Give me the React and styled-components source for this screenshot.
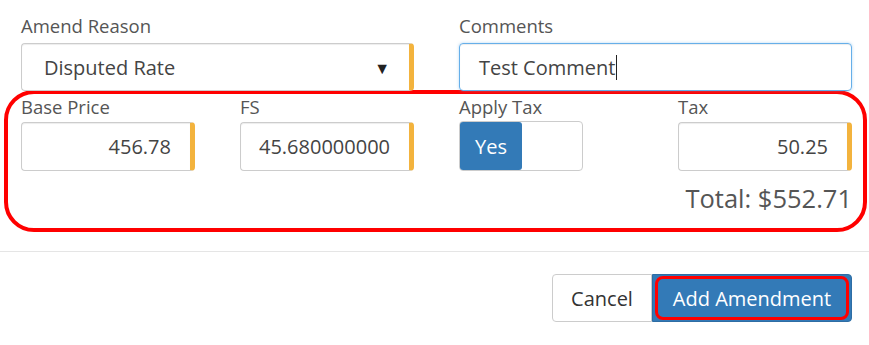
import React from 'react';
import styled, { createGlobalStyle } from 'styled-components';

const GlobalStyle = createGlobalStyle`
  body {
    margin: 0;
    background: #ffffff;
    font-family: "Open Sans", "Liberation Sans", sans-serif;
  }
  * {
    box-sizing: border-box;
  }
`;

// Form body
const Page = styled.div`
  width: 869px;
  padding: 13px 17px 0 21px;
`;

const FieldGrid = styled.div`
  display: grid;
  grid-template-columns: repeat(${(p) => p.cols}, ${(p) => p.colWidth}px);
  column-gap: 45px;
`;

const Field = styled.div`
  display: flex;
  flex-direction: column;
`;

const Label = styled.label`
  font-size: 18.5px;
  line-height: 26px;
  color: #555555;
  margin-bottom: ${(p) => p.gap || 4}px;
`;

// Generic text box, yellow bar marks required fields
const Box = styled.div`
  height: ${(p) => p.h || 48}px;
  display: flex;
  align-items: center;
  justify-content: ${(p) => (p.right ? 'flex-end' : p.start ? 'flex-start' : 'space-between')};
  padding: ${(p) => (p.right ? '0 19px 0 12px' : p.start ? '0 18px 0 19px' : '0 18px 0 22px')};
  border: 1px solid ${(p) => (p.focused ? '#66afe9' : '#cccccc')};
  border-right: ${(p) => (p.required ? '5px solid #f3b33d' : `1px solid ${p.focused ? '#66afe9' : '#cccccc'}`)};
  border-radius: 4px;
  box-shadow: ${(p) =>
    p.focused
      ? 'inset 0 1px 1px rgba(0,0,0,.075), 0 0 3px rgba(102,175,233,.5)'
      : 'inset 0 1px 1px rgba(0,0,0,.075)'};
  font-size: 20px;
  color: #444444;
  white-space: nowrap;
  overflow: hidden;
`;

const Caret = styled.span`
  display: inline-block;
  width: 1px;
  height: 25px;
  background: #222222;
  margin-left: 1px;
  vertical-align: middle;
`;

const Arrow = styled.span`
  font-size: 16px;
  color: #222222;
  margin: 1px 1px 0 0;
`;

// Annotation frame around the price row
const Highlight = styled.div`
  margin: -1px -15px 0 -17px;
  padding: 0 11px 13px 13px;
  border: 4px solid #ff0000;
  border-radius: 30px;
`;

const Toggle = styled.div`
  width: 124px;
  height: 50px;
  display: flex;
  border: 1px solid #cccccc;
  border-radius: 4px;
`;

const ToggleOption = styled.div`
  width: 62px;
  display: flex;
  align-items: center;
  justify-content: center;
  font-size: 20px;
  color: #ffffff;
  background: ${(p) => (p.active ? '#337ab7' : 'transparent')};
  border-radius: 3px;
`;

const Total = styled.div`
  margin-top: 10px;
  text-align: right;
  font-size: 25.5px;
  line-height: 34px;
  color: #555555;
`;

const Divider = styled.div`
  margin: 19px -17px 0 -21px;
  border-top: 1px solid #e5e5e5;
`;

const Footer = styled.div`
  display: flex;
  justify-content: flex-end;
  padding-top: 22px;
`;

const Button = styled.button`
  position: relative;
  height: 48px;
  width: ${(p) => p.w}px;
  font-family: inherit;
  font-size: 20px;
  color: ${(p) => (p.primary ? '#ffffff' : '#333333')};
  background: ${(p) => (p.primary ? '#337ab7' : '#ffffff')};
  border: 1px solid ${(p) => (p.primary ? '#2e6da4' : '#cccccc')};
  border-radius: ${(p) => (p.primary ? '0 4px 4px 0' : '4px 0 0 4px')};
  padding: 0;

  &::after {
    content: '';
    display: ${(p) => (p.marked ? 'block' : 'none')};
    position: absolute;
    inset: 1px 2px 1px 2px;
    border: 3px solid #ff0000;
    border-radius: 8px;
  }
`;

const App = () => (
  <>
    <GlobalStyle />
    <Page>
      <FieldGrid cols={2} colWidth={393}>
        <Field>
          <Label>Amend Reason</Label>
          <Box required>
            <span>Disputed Rate</span>
            <Arrow>▼</Arrow>
          </Box>
        </Field>
        <Field>
          <Label>Comments</Label>
          <Box focused start>
            <span>Test Comment</span>
            <Caret />
          </Box>
        </Field>
      </FieldGrid>

      <Highlight>
        <FieldGrid cols={4} colWidth={174}>
          <Field>
            <Label gap={2}>Base Price</Label>
            <Box required right h={49}>456.78</Box>
          </Field>
          <Field>
            <Label gap={2}>FS</Label>
            <Box required right h={49}>45.680000000</Box>
          </Field>
          <Field>
            <Label gap={1}>Apply Tax</Label>
            <Toggle>
              <ToggleOption active>Yes</ToggleOption>
            </Toggle>
          </Field>
          <Field>
            <Label gap={2}>Tax</Label>
            <Box required right h={49}>50.25</Box>
          </Field>
        </FieldGrid>
        <Total>Total: $552.71</Total>
      </Highlight>

      <Divider />

      <Footer>
        <Button w={100}>Cancel</Button>
        <Button w={200} primary marked>Add Amendment</Button>
      </Footer>
    </Page>
  </>
);

export default App;
